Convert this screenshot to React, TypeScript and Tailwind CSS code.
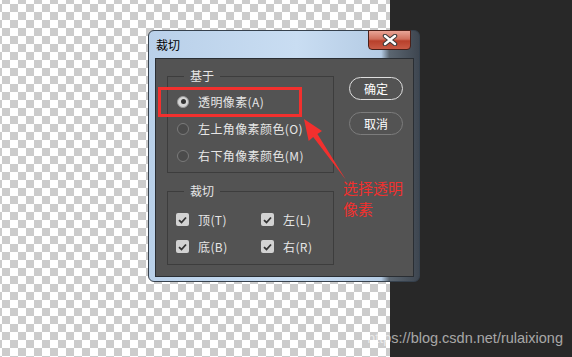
import React from 'react';

const cjk = { fontFamily: '"Noto Sans CJK SC", "Liberation Sans", sans-serif' };

const Radio: React.FC<{ checked?: boolean; label: string }> = ({ checked, label }) => (
  <div className="flex items-center h-[27px]">
    {checked ? (
      <span className="w-[12px] h-[12px] rounded-full bg-[#d6d6d6] border border-[#9a9a9a] flex items-center justify-center">
        <span className="w-[5px] h-[5px] rounded-full bg-[#333]" />
      </span>
    ) : (
      <span className="w-[12px] h-[12px] rounded-full bg-[#4b4b4b] border border-[#7a7a7a]" />
    )}
    <span className="ml-[9px] text-[12px] leading-[16px] tracking-[0.4px] text-[#e6e6e6]">{label}</span>
  </div>
);

const Check: React.FC<{ label: string }> = ({ label }) => (
  <div className="flex items-center h-[27px]">
    <span className="w-[13px] h-[13px] rounded-[2px] bg-[#d2d2d2] flex items-center justify-center">
      <svg width="9" height="8" viewBox="0 0 9 8">
        <path d="M1 4.2 L3.5 6.5 L8 1.5" fill="none" stroke="#333" strokeWidth="1.8" />
      </svg>
    </span>
    <span className="ml-[9px] text-[12px] leading-[16px] tracking-[0.4px] text-[#e6e6e6]">{label}</span>
  </div>
);

export default function App() {
  return (
    <div className="relative w-[572px] h-[357px] flex overflow-hidden" style={cjk}>
      {/* canvas */}
      <div className="w-[390px] h-full bg-[conic-gradient(#cccccc_25%,#ffffff_0_50%,#cccccc_0_75%,#ffffff_0)] bg-[length:16px_16px] bg-[position:2px_4px]" />
      <div className="flex-1 h-full bg-[#282828]" />

      {/* dialog window */}
      <div className="absolute left-[148px] top-[30px] w-[272px] h-[252px] flex flex-col rounded-[6px] border border-[#36414d] bg-[linear-gradient(to_right,#b9d0e9_0%,#c9ddf2_55%,#b4cbe4_86%,#5b6671_89%,#3e4650_100%)]">
        {/* title bar */}
        <div className="h-[27px] flex items-start pl-[7px] pr-[8px]">
          <span className="mt-[6px] text-[12px] leading-[16px] text-black">裁切</span>
          <button className="ml-auto -mt-px w-[43px] h-[20px] rounded-b-[4px] border border-[#4a2019] bg-[linear-gradient(to_bottom,#e9a597_0%,#d0705d_45%,#b8402b_55%,#c85a45_100%)] flex items-center justify-center">
            <svg width="16" height="12" viewBox="0 0 16 12">
              <path d="M3 2 L13 10 M13 2 L3 10" stroke="#3a3a3a" strokeWidth="4.5" strokeLinecap="round" />
              <path d="M3 2 L13 10 M13 2 L3 10" stroke="#ffffff" strokeWidth="2.4" strokeLinecap="round" />
            </svg>
          </button>
        </div>

        {/* client area */}
        <div className="ml-[6px] mr-[5px] mb-[4px] flex-1 bg-[#535353] border border-[#2a2e33] flex pl-[11px] pt-[9px]">
          <div className="w-[167px] flex flex-col">
            <fieldset className="border border-[#3d3d3d] pl-[9px] pt-[4px] pb-[3px]">
              <legend className="ml-[7px] px-[6px] text-[12px] leading-[16px] text-[#e6e6e6]">基于</legend>
              <Radio checked label="透明像素(A)" />
              <Radio label="左上角像素颜色(O)" />
              <Radio label="右下角像素颜色(M)" />
            </fieldset>
            <fieldset className="mt-[10px] border border-[#3d3d3d] pl-[8px] pt-[7px] pb-[4px]">
              <legend className="ml-[8px] px-[6px] text-[12px] leading-[16px] text-[#e6e6e6]">裁切</legend>
              <div className="grid grid-cols-[85px_1fr]">
                <Check label="顶(T)" />
                <Check label="左(L)" />
                <Check label="底(B)" />
                <Check label="右(R)" />
              </div>
            </fieldset>
          </div>
          <div className="ml-[15px] pt-[9px] flex flex-col gap-[12px]">
            <button className="w-[54px] h-[23px] rounded-full border-[1.5px] border-[#dedede] text-[12px] text-white">确定</button>
            <button className="w-[54px] h-[23px] rounded-full border-[1.5px] border-[#7c7c7c] text-[12px] text-white">取消</button>
          </div>
        </div>
      </div>

      {/* annotation */}
      <div className="absolute left-[158px] top-[87px] w-[144px] h-[30px] border-[3px] border-[#f2302e]" />
      <svg className="absolute inset-0 pointer-events-none" width="572" height="357" viewBox="0 0 572 357">
        <polygon points="304,119 322,131 317.4,134.1 346,180 313.2,137 308.7,141" fill="#f2302e" />
      </svg>
      <div className="absolute left-[343px] top-[177px] text-[15px] leading-[21px] text-[#f2302e]">
        <div>选择透明</div>
        <div>像素</div>
      </div>

      {/* watermark */}
      <div className="absolute right-[9px] top-[329px] text-[14.5px] leading-[18px] text-white/60" style={{ fontFamily: '"Liberation Sans", sans-serif' }}>
        https://blog.csdn.net/rulaixiong
      </div>
    </div>
  );
}
